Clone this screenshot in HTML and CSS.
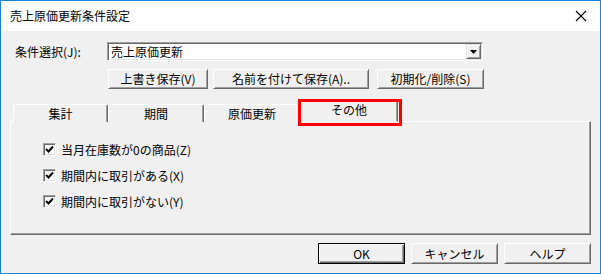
FILE: index.html
```html
<!DOCTYPE html>
<html lang="ja">
<head>
<meta charset="utf-8">
<link rel="stylesheet" href="styles.css">
</head>
<body>
<div class="window">
  <div class="titlebar">
    <span class="title">売上原価更新条件設定</span>
    <svg class="close" width="12" height="12" viewBox="0 0 12 12"><path d="M1 1 L11 11 M11 1 L1 11" stroke="#000" stroke-width="1.1" fill="none"/></svg>
  </div>
  <div class="client">
    <div class="row1">
      <span class="label">条件選択(J):</span>
      <div class="combo">
        <span class="combo-text">売上原価更新</span>
        <span class="combo-btn"><svg width="7" height="4" viewBox="0 0 7 4"><path d="M0 0 H7 L3.5 4 Z" fill="#000"/></svg></span>
      </div>
    </div>
    <div class="row2">
      <button class="btn b1">上書き保存(V)</button>
      <button class="btn b2">名前を付けて保存(A)..</button>
      <button class="btn b3">初期化/削除(S)</button>
    </div>
    <div class="tabs">
      <div class="tab t1">集計</div>
      <div class="tab t2">期間</div>
      <div class="tab t3">原価更新</div>
      <div class="tab sel">その他<span class="mark"></span></div>
    </div>
    <div class="panel">
      <div class="check-row"><span class="cb"><svg width="9" height="9" viewBox="0 0 9 9"><path d="M1 4 L3.5 6.5 L8 1.5" stroke="#000" stroke-width="2" fill="none"/></svg></span><span>当月在庫数が0の商品(Z)</span></div>
      <div class="check-row"><span class="cb"><svg width="9" height="9" viewBox="0 0 9 9"><path d="M1 4 L3.5 6.5 L8 1.5" stroke="#000" stroke-width="2" fill="none"/></svg></span><span>期間内に取引がある(X)</span></div>
      <div class="check-row"><span class="cb"><svg width="9" height="9" viewBox="0 0 9 9"><path d="M1 4 L3.5 6.5 L8 1.5" stroke="#000" stroke-width="2" fill="none"/></svg></span><span>期間内に取引がない(Y)</span></div>
    </div>
    <div class="footer">
      <button class="btn fb default">OK</button>
      <button class="btn fb">キャンセル</button>
      <button class="btn fb">ヘルプ</button>
    </div>
  </div>
</div>
</body>
</html>
```

FILE: styles.css
```css
* { box-sizing: border-box; }
html, body { margin: 0; padding: 0; }
body {
  font-family: "Noto Sans CJK JP", "Noto Sans", sans-serif;
  font-size: 12px;
  color: #000;
  background: #fff;
}
.window {
  width: 601px;
  height: 274px;
  border: 1px solid #1883d7;
  display: flex;
  flex-direction: column;
  background: #f0f0f0;
}
.titlebar {
  height: 30px;
  background: #fff;
  display: flex;
  align-items: center;
  padding-left: 9px;
  padding-right: 13px;
  justify-content: space-between;
  flex: none;
}
.title { font-size: 12px; line-height: 1; margin-top: -1px; }
.close { display: block; margin-top: -1px; }
.client {
  flex: 1;
  background: #f0f0f0;
  display: flex;
  flex-direction: column;
  padding: 11px 9px 0 9px;
}
.row1 {
  display: flex;
  align-items: center;
  height: 19px;
}
.label {
  width: 97px;
  padding-left: 5px;
  line-height: 1;
}
.combo {
  width: 376px;
  height: 19px;
  background: #fff;
  border-top: 1px solid #a0a0a0;
  border-left: 1px solid #a0a0a0;
  border-bottom: 1px solid #fff;
  border-right: 1px solid #fff;
  box-shadow: inset 1px 1px #696969, inset -1px -1px #e3e3e3;
  display: flex;
  align-items: center;
  justify-content: space-between;
  padding: 0 1px 0 3px;
}
.combo-text { line-height: 1; }
.combo-btn {
  width: 15px;
  height: 15px;
  background: #f0f0f0;
  border: 1px solid;
  border-color: #e3e3e3 #696969 #696969 #e3e3e3;
  box-shadow: inset 1px 1px #fff, inset -1px -1px #a0a0a0;
  display: flex;
  align-items: center;
  justify-content: center;
  margin-right: 0;
}
.combo-btn svg { display: block; margin-top: 1px; }
.row2 {
  display: flex;
  margin-top: 8px;
  padding-left: 98px;
  height: 20px;
}
.btn {
  font-family: inherit;
  font-size: 12px;
  line-height: 1;
  height: 20px;
  background: #f0f0f0;
  border: 1px solid;
  border-color: #fff #696969 #696969 #fff;
  box-shadow: inset 1px 1px #f0f0f0, inset -1px -1px #a0a0a0;
  padding: 0;
  color: #000;
  display: flex;
  align-items: center;
  justify-content: center;
}
.b1 { width: 100px; }
.b2 { width: 156px; margin-left: 5px; }
.b3 { width: 107px; margin-left: 8px; }
.tabs {
  display: flex;
  align-items: flex-end;
  margin-top: 11px;
  height: 22px;
  padding-left: 3px;
  position: relative;
  z-index: 1;
  margin-bottom: -1px;
}
.tab {
  height: 18px;
  background: #f0f0f0;
  border-top: 1px solid #fff;
  border-left: 1px solid #fff;
  border-right: 1px solid #696969;
  box-shadow: inset -1px 0 #a0a0a0;
  border-radius: 2px 2px 0 0;
  display: flex;
  align-items: center;
  justify-content: center;
  line-height: 1;
  padding-top: 1px;
}
.t1 { width: 95px; }
.t2 { width: 96px; }
.t3 { width: 96px; }
.sel {
  width: 98px;
  height: 22px;
  position: relative;
  padding-bottom: 4px;
  border-bottom: 1px solid #f0f0f0;
}
.mark {
  position: absolute;
  left: -3px;
  top: -2px;
  width: 104px;
  height: 27px;
  border: 3px solid #ff0000;
  pointer-events: none;
}
.panel {
  width: 581px;
  height: 114px;
  border-top: 1px solid #fff;
  border-left: 1px solid #fff;
  border-right: 1px solid #696969;
  border-bottom: 1px solid #696969;
  box-shadow: inset -1px -1px #a0a0a0;
  padding: 21px 0 0 32px;
  display: flex;
  flex-direction: column;
  gap: 13px;
}
.check-row {
  display: flex;
  align-items: center;
  height: 13px;
  line-height: 1;
}
.cb {
  width: 13px;
  height: 13px;
  background: #fff;
  border-top: 1px solid #a0a0a0;
  border-left: 1px solid #a0a0a0;
  border-bottom: 1px solid #fff;
  border-right: 1px solid #fff;
  box-shadow: inset 1px 1px #696969, inset -1px -1px #e3e3e3;
  display: flex;
  align-items: center;
  justify-content: center;
  margin-right: 5px;
  flex: none;
}
.cb svg { display: block; }
.footer {
  display: flex;
  justify-content: flex-end;
  gap: 6px;
  margin-top: 8px;
  padding-right: 0;
  width: 581px;
}
.fb { width: 87px; height: 21px; }
.default {
  border: 1px solid #000;
  box-shadow: inset 1px 1px #fff, inset -1px -1px #696969, inset -2px -2px #a0a0a0;
}
```
